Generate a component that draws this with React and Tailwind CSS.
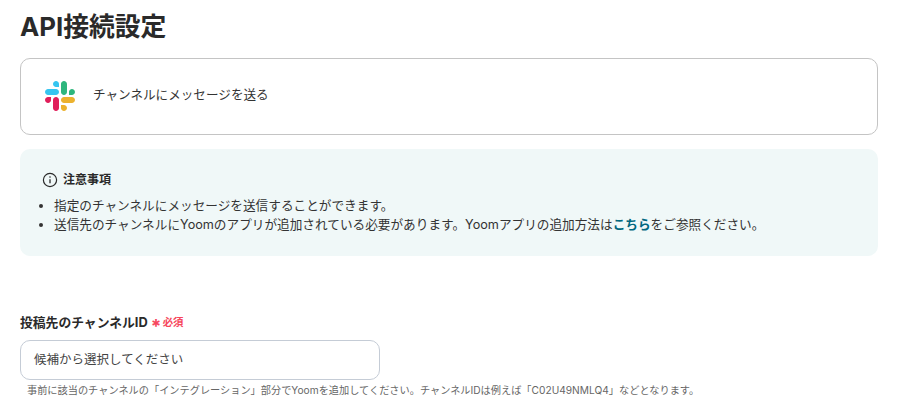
import React from 'react';

function SlackLogo() {
  return (
    <svg viewBox="0 0 2447.6 2452.5" className="w-[30px] h-[30px] shrink-0">
      <path d="M897.4 0C762.1.1 652.6 109.9 652.7 245.2c-.1 135.3 109.5 245.1 244.8 245.2h244.8V245.3C1142.4 110 1032.8.2 897.4 0c.1 0 .1 0 0 0m0 654H244.8C109.5 654.1-.1 763.9 0 899.2c-.2 135.3 109.4 245.1 244.7 245.3h652.7c135.3-.1 244.9-109.9 244.8-245.2.1-135.4-109.5-245.2-244.8-245.3z" fill="#36c5f0" />
      <path d="M2447.6 899.2c.1-135.3-109.5-245.1-244.8-245.2-135.3.1-244.9 109.9-244.8 245.2v245.3h244.8c135.3-.1 244.9-109.9 244.8-245.3zm-652.7 0V245.2C1795 110 1685.5.2 1550.2 0c-135.3.1-244.9 109.9-244.8 245.2v654c-.2 135.3 109.4 245.1 244.7 245.3 135.3-.1 244.9-109.9 244.8-245.3z" fill="#2eb67d" />
      <path d="M1550.1 2452.5c135.3-.1 244.9-109.9 244.8-245.2.1-135.3-109.5-245.1-244.8-245.2h-244.8v245.2c-.1 135.2 109.5 245 244.8 245.2zm0-654.1h652.7c135.3-.1 244.9-109.9 244.8-245.2.2-135.3-109.4-245.1-244.7-245.3h-652.7c-135.3.1-244.9 109.9-244.8 245.2-.1 135.4 109.4 245.2 244.7 245.3z" fill="#ecb22e" />
      <path d="M0 1553.2c-.1 135.3 109.5 245.1 244.8 245.2 135.3-.1 244.9-109.9 244.8-245.2V1308H244.8C109.5 1308.1-.1 1417.9 0 1553.2zm652.7 0v654c-.2 135.3 109.4 245.1 244.7 245.3 135.3-.1 244.9-109.9 244.8-245.2v-653.9c.2-135.3-109.4-245.1-244.7-245.3-135.4 0-244.9 109.8-244.8 245.1 0 0 0 .1 0 0" fill="#e01e5a" />
    </svg>
  );
}

function InfoIcon() {
  return (
    <svg viewBox="0 0 16 16" fill="none" stroke="#2a2a2a" className="w-4 h-4 shrink-0">
      <circle cx="8" cy="8" r="6.6" strokeWidth="1.2" />
      <path d="M8 7.2v4" strokeWidth="1.3" />
      <circle cx="8" cy="5" r="0.8" fill="#2a2a2a" stroke="none" />
    </svg>
  );
}

export default function App() {
  return (
    <div className="w-[902px] h-[415px] overflow-hidden bg-white pl-5 pr-6 text-[#2a2a2a] font-['Inter','Noto_Sans_CJK_JP',sans-serif]">
      <h1 className="h-[58px] pt-[11px] text-[25.8px] leading-[32px] font-bold">API接続設定</h1>

      <div className="h-[77px] flex items-center gap-[18px] pl-[24px] pb-[2px] border border-[#c4c4c4] rounded-[10px]">
        <SlackLogo />
        <span className="text-[12.6px] text-[#333333]">チャンネルにメッセージを送る</span>
      </div>

      <div className="mt-[14px] h-[107px] bg-[#f0f8f8] rounded-[10px] pt-[23px] pl-[22px]">
        <div className="flex items-center gap-[5px] h-4">
          <InfoIcon />
          <span className="text-[12px] font-bold">注意事項</span>
        </div>
        <ul className="mt-[8px] list-disc pl-[12px] text-[12.65px] leading-[19px] text-[#333333]">
          <li>指定のチャンネルにメッセージを送信することができます。</li>
          <li>
            送信先のチャンネルにYoomのアプリが追加されている必要があります。Yoomアプリの追加方法は
            <a className="font-bold text-[#00677f]">こちら</a>
            をご参照ください。
          </li>
        </ul>
      </div>

      <div className="mt-[59px] h-[16px] flex items-center font-bold text-[#f6465c]">
        <span className="text-[12.8px] text-[#2a2a2a]">投稿先のチャンネルID</span>
        <span className="ml-[2px] w-[13px] text-center text-[19px] leading-none pt-[6px]">*</span>
        <span className="text-[10.4px]">必須</span>
      </div>

      <div className="mt-[9px] w-[360px] h-[40px] flex items-center pl-[13px] border border-[#c5ccd6] rounded-[10px] text-[12.5px] text-[#444444]">
        候補から選択してください
      </div>

      <p className="mt-[3px] ml-[7px] text-[10.2px] leading-[14px] text-[#666666]">
        事前に該当のチャンネルの「インテグレーション」部分でYoomを追加してください。チャンネルIDは例えば「C02U49NMLQ4」などとなります。
      </p>
    </div>
  );
}
